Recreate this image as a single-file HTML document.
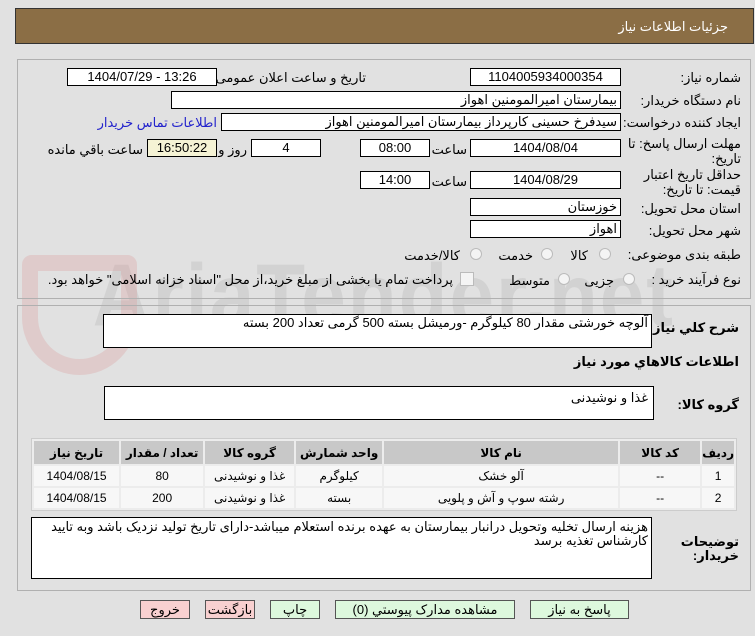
<!DOCTYPE html>
<html><head><meta charset="utf-8"><style>
body{margin:0;width:755px;height:636px;background:#e1e1e1;font-family:"Liberation Sans","DejaVu Sans",sans-serif;font-size:12px;color:#000;position:relative;overflow:hidden}
.a{position:absolute}
.box{position:absolute;background:#fff;border:1px solid #000;box-sizing:border-box;height:18px;line-height:16px;text-align:center;font-size:13px}
.l{position:absolute;white-space:nowrap;direction:rtl;font-size:13px}
.panel{position:absolute;border:1px solid #b0b0b0;box-sizing:border-box}
.rad{position:absolute;width:12px;height:12px;border:1px solid #bbb;border-radius:50%;background:#f4f4f4;box-sizing:border-box}
table{border-collapse:separate;border-spacing:2px;position:absolute;left:31px;top:438px;width:706px;background:#ececec;border:1px solid #ccc}
td,th{font-size:12px;text-align:center;height:20px;padding:0}
th{background:#c8c8c8;height:23px;font-weight:bold}
td{background:#f7f7f7}
.btn{position:absolute;top:600px;height:19px;border:1px solid #555;box-sizing:border-box;text-align:center;line-height:17px;font-size:13px;background:#ddf8dd}
.red{background:#f8d0d0}
</style></head><body>
<div class="a" style="left:15px;top:8px;width:739px;height:36px;background:#8b6e45;border:1px solid #333;box-sizing:border-box"></div>
<div class="l" style="right:27px;top:19px;color:#fff;font-size:13px">جزئیات اطلاعات نیاز</div>

<div class="a" style="left:20px;top:250px;font-size:80px;font-weight:bold;color:rgba(160,160,160,0.22);letter-spacing:2px;font-family:'Liberation Sans';transform:scaleY(1.1)">&nbsp;&nbsp;&nbsp;AriaTender.net</div>
<div class="a" style="left:22px;top:255px;width:115px;height:120px;border:16px solid rgba(220,140,140,0.25);border-radius:10px 10px 60px 60px;box-sizing:border-box"></div>

<div class="panel" style="left:17px;top:59px;width:734px;height:240px"></div>
<div class="panel" style="left:17px;top:305px;width:734px;height:286px"></div>

<div class="l" style="right:14px;top:70px">شماره نیاز:</div>
<div class="box" style="left:470px;top:68px;width:151px">1104005934000354</div>
<div class="l" style="right:389px;top:70px">تاریخ و ساعت اعلان عمومی:</div>
<div class="box" style="left:67px;top:68px;width:150px">1404/07/29 - 13:26</div>

<div class="l" style="right:14px;top:93px">نام دستگاه خریدار:</div>
<div class="box" style="left:171px;top:91px;width:450px;text-align:right;padding-right:3px">بیمارستان امیرالمومنین اهواز</div>

<div class="l" style="right:14px;top:115px">ایجاد کننده درخواست:</div>
<div class="box" style="left:221px;top:113px;width:400px;text-align:right;padding-right:3px">سیدفرخ حسینی کارپرداز بیمارستان امیرالمومنین اهواز</div>
<div class="l" style="right:538px;top:115px;color:#2222cc">اطلاعات تماس خریدار</div>

<div class="l" style="right:14px;top:136px">مهلت ارسال پاسخ: تا</div>
<div class="l" style="right:14px;top:151px">تاریخ:</div>
<div class="box" style="left:470px;top:139px;width:151px">1404/08/04</div>
<div class="l" style="right:288px;top:142px">ساعت</div>
<div class="box" style="left:360px;top:139px;width:70px">08:00</div>
<div class="box" style="left:251px;top:139px;width:70px">4</div>
<div class="l" style="right:508px;top:142px">روز و</div>
<div class="box" style="left:147px;top:139px;width:70px;background:#f5f3d5">16:50:22</div>
<div class="l" style="right:612px;top:142px">ساعت باقي مانده</div>

<div class="l" style="right:14px;top:167px">حداقل تاریخ اعتبار</div>
<div class="l" style="right:14px;top:182px">قیمت: تا تاریخ:</div>
<div class="box" style="left:470px;top:171px;width:151px">1404/08/29</div>
<div class="l" style="right:288px;top:174px">ساعت</div>
<div class="box" style="left:360px;top:171px;width:70px">14:00</div>

<div class="l" style="right:14px;top:201px">استان محل تحویل:</div>
<div class="box" style="left:470px;top:198px;width:151px;text-align:right;padding-right:3px">خوزستان</div>
<div class="l" style="right:14px;top:223px">شهر محل تحویل:</div>
<div class="box" style="left:470px;top:220px;width:151px;text-align:right;padding-right:3px">اهواز</div>

<div class="l" style="right:14px;top:247px">طبقه بندی موضوعی:</div>
<div class="rad" style="left:599px;top:248px"></div><div class="l" style="right:167px;top:248px">کالا</div>
<div class="rad" style="left:541px;top:248px"></div><div class="l" style="right:222px;top:248px">خدمت</div>
<div class="rad" style="left:470px;top:248px"></div><div class="l" style="right:295px;top:248px">کالا/خدمت</div>

<div class="l" style="right:14px;top:272px">نوع فرآیند خرید :</div>
<div class="rad" style="left:623px;top:273px"></div><div class="l" style="right:141px;top:273px">جزیی</div>
<div class="rad" style="left:558px;top:273px"></div><div class="l" style="right:205px;top:273px">متوسط</div>
<div class="a" style="left:460px;top:272px;width:12px;height:12px;border:1px solid #bbb;background:#f4f4f4"></div>
<div class="l" style="right:302px;top:272px">پرداخت تمام یا بخشی از مبلغ خرید،از محل "اسناد خزانه اسلامی" خواهد بود.</div>

<div class="l" style="right:16px;top:320px;font-weight:bold">شرح کلي نیاز:</div>
<div class="box" style="left:103px;top:314px;width:549px;height:34px;text-align:right;padding-right:3px">آلوچه خورشتی مقدار 80 کیلوگرم -ورمیشل بسته 500 گرمی تعداد 200 بسته</div>
<div class="l" style="right:16px;top:354px;font-weight:bold">اطلاعات کالاهاي مورد نیاز</div>
<div class="l" style="right:16px;top:397px;font-weight:bold">گروه کالا:</div>
<div class="box" style="left:104px;top:386px;width:550px;height:34px;text-align:right;padding-right:5px;line-height:22px">غذا و نوشیدنی</div>

<table dir="rtl">
<tr><th style="width:27px">ردیف</th><th style="width:80px">کد کالا</th><th style="width:234px">نام کالا</th><th style="width:86px">واحد شمارش</th><th style="width:89px">گروه کالا</th><th style="width:82px">تعداد / مقدار</th><th>تاریخ نیاز</th></tr>
<tr><td>1</td><td>--</td><td>آلو خشک</td><td>کیلوگرم</td><td>غذا و نوشیدنی</td><td>80</td><td>1404/08/15</td></tr>
<tr><td>2</td><td>--</td><td>رشته سوپ و آش و پلویی</td><td>بسته</td><td>غذا و نوشیدنی</td><td>200</td><td>1404/08/15</td></tr>
</table>

<div class="l" style="right:16px;top:534px;font-weight:bold">توضیحات</div>
<div class="l" style="right:16px;top:548px;font-weight:bold">خریدار:</div>
<div class="box" style="left:31px;top:517px;width:621px;height:62px;text-align:right;padding:2px 3px;line-height:14px;direction:rtl">هزینه ارسال تخلیه وتحویل درانبار بیمارستان به عهده برنده استعلام میباشد-دارای تاریخ تولید نزدیک باشد وبه تایید کارشناس تغذیه برسد</div>

<div class="btn" style="left:530px;width:99px">پاسخ به نیاز</div>
<div class="btn" style="left:335px;width:180px">مشاهده مدارک پیوستي (0)</div>
<div class="btn" style="left:270px;width:50px">چاپ</div>
<div class="btn red" style="left:205px;width:50px">بازگشت</div>
<div class="btn red" style="left:140px;width:50px">خروج</div>
</body></html>
